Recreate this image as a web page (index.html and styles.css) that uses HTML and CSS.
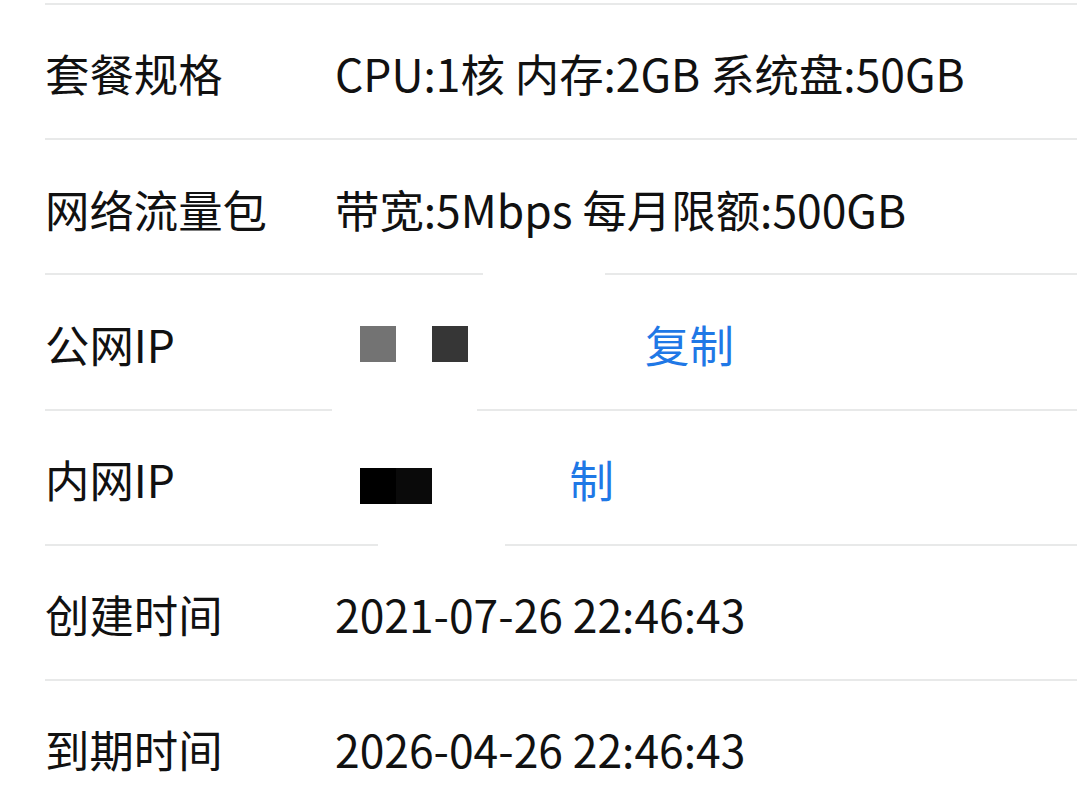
FILE: index.html
```html
<!DOCTYPE html>
<html lang="zh-CN">
<head>
<meta charset="utf-8">
<title>实例详情</title>
<link rel="stylesheet" href="styles.css">
</head>
<body>
<div class="list">
  <div class="row">
    <div class="label">套餐规格</div>
    <div class="value">CPU:1核 内存:2GB 系统盘:50GB</div>
  </div>
  <div class="row">
    <div class="label">网络流量包</div>
    <div class="value">带宽:5Mbps 每月限额:500GB</div>
  </div>
  <div class="row">
    <div class="label">公网IP</div>
    <div class="value">
      <span class="ip ip-public">
        <span class="px px-gray"></span>
        <span class="px px-dark"></span>
      </span>
      <span class="copy copy-public">复制</span>
    </div>
  </div>
  <div class="row">
    <div class="label">内网IP</div>
    <div class="value">
      <span class="ip ip-private">
        <span class="px px-black"></span>
        <span class="px px-black2"></span>
      </span>
      <span class="copy copy-private"><span class="masked">复</span>制</span>
    </div>
  </div>
  <div class="row">
    <div class="label">创建时间</div>
    <div class="value">2021-07-26 22:46:43</div>
  </div>
  <div class="row">
    <div class="label">到期时间</div>
    <div class="value">2026-04-26 22:46:43</div>
  </div>
  <div class="mask mask-1"></div>
  <div class="mask mask-2"></div>
  <div class="mask mask-3"></div>
</div>
</body>
</html>
```

FILE: styles.css
```css
html, body {
  margin: 0;
  padding: 0;
  background: #ffffff;
}

body {
  font-family: "Noto Sans CJK SC", "Noto Sans", sans-serif;
  color: #111111;
  overflow: hidden;
}

.list {
  position: relative;
  padding-top: 3px;
  margin-left: 45px;
}

.row {
  display: flex;
  align-items: center;
  box-sizing: border-box;
  height: 135.2px;
  border-top: 2px solid #e8e9e9;
  padding-top: 4px;
  font-size: 44.4px;
  line-height: 1;
}

.label {
  width: 290px;
  flex: none;
}

.value {
  display: flex;
  align-items: center;
  white-space: nowrap;
}

.ip {
  display: flex;
  align-items: center;
}

.px {
  display: block;
  width: 36px;
  height: 36px;
}

.ip-public {
  margin-left: 25px;
  gap: 36px;
}

.px-gray { background: #737373; }
.px-dark { background: #363636; }

.ip-private {
  margin-left: 25px;
  margin-top: 14px;
}

.px-black { background: #000000; }
.px-black2 { background: #0a0a0a; }

.copy {
  color: #1f78e6;
}

.copy-public {
  margin-left: 177px;
}

.copy-private {
  margin-left: 93px;
}

.masked {
  visibility: hidden;
}

.mask {
  position: absolute;
  height: 6px;
  background: #ffffff;
}

.mask-1 { top: 270px; left: 438px; width: 122px; }
.mask-2 { top: 406px; left: 287px; width: 145px; }
.mask-3 { top: 541px; left: 333px; width: 127px; }
```
